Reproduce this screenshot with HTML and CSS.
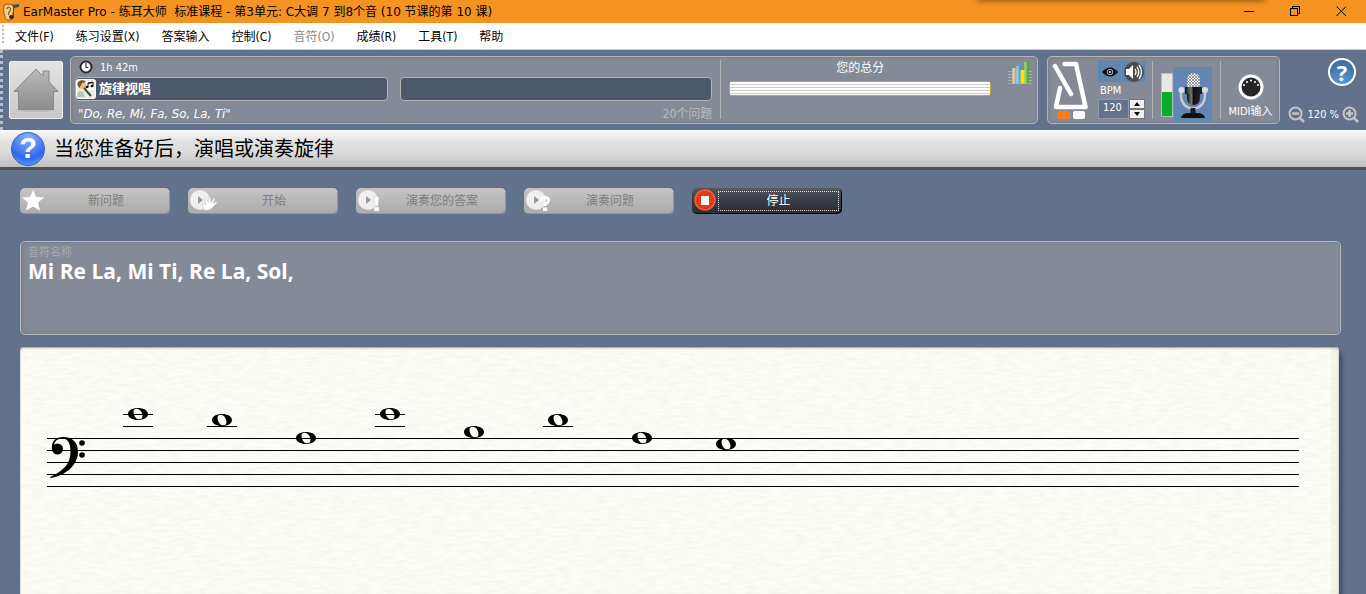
FILE: index.html
```html
<!DOCTYPE html>
<html lang="zh-CN">

<head>
  <meta charset="UTF-8">
  <meta name="viewport" content="width=device-width, initial-scale=1.0">
  <title>EarMaster Pro</title>
  <link rel="stylesheet" href="styles.css">
</head>

<body>
  <header class="titlebar">
    <svg class="app-icon" width="17" height="18" viewBox="0 0 17 18" aria-hidden="true">
      <path d="M2.500 2C5 .8 8 .8 11 2C12 5 12 8 11 10L10.500 16C7 18 3 17 3 14C1.500 10 1 5 2.500 2Z" fill="#f4cf82" stroke="#8a5516"/>
      <path d="M5 6C6 3 9 4 8.500 7C8 9 6 9 6.500 12" fill="none" stroke="#8a5c20" stroke-width="1.200"/>
      <path d="M10 2L17 1V4L12 5V14H11V4Z" fill="#4f4a48"/>
      <ellipse cx="9.500" cy="14" rx="2.500" ry="2" fill="#3c2410"/>
    </svg>
    <h1>EarMaster Pro - 练耳大师&nbsp; 标准课程 - 第3单元: C大调 7 到8个音 (10 节课的第 10 课)</h1>
    <div class="window-buttons">
      <button type="button" aria-label="最小化"><svg width="11" height="11" viewBox="0 0 11 11" shape-rendering="crispEdges"><path d="M0 5.500H10" stroke="#000"/></svg></button>
      <button type="button" aria-label="还原"><svg width="11" height="11" viewBox="0 0 11 11" shape-rendering="crispEdges"><path d="M.5 2.500H7.500V9.500H.5ZM2.500 2V.5H9.500V7.500H8" fill="none" stroke="#000"/></svg></button>
      <button type="button" aria-label="关闭"><svg width="11" height="11" viewBox="0 0 11 11"><path d="M.5 .5L10 10M10 .5L.5 10" stroke="#000"/></svg></button>
    </div>
    <div class="top-shadow"></div>
  </header>

  <nav class="menubar">
    <button type="button">文件(F)</button>
    <button type="button">练习设置(X)</button>
    <button type="button">答案输入</button>
    <button type="button">控制(C)</button>
    <button type="button" disabled>音符(O)</button>
    <button type="button">成绩(R)</button>
    <button type="button">工具(T)</button>
    <button type="button">帮助</button>
  </nav>

  <div class="toolbar">
    <button type="button" class="home" aria-label="主页">
      <svg width="46" height="46" viewBox="0 0 46 46">
        <defs>
          <linearGradient id="house" x1="0" y1="0" x2="0" y2="1"><stop offset="0" stop-color="#b9b9b9"/><stop offset="1" stop-color="#8d8d8d"/></linearGradient>
        </defs>
        <ellipse cx="23" cy="43" rx="21" ry="2" fill="#bdbdbd"/>
        <path d="M1 24.500L23 2L30 9V4H36V15L45 24.500H40.500V42.500H5.500V24.500Z" fill="url(#house)" stroke="#888" stroke-linejoin="round"/>
      </svg>
    </button>

    <section class="panel lesson">
      <div class="progress">
        <div class="time">
          <svg width="14" height="14" viewBox="0 0 14 14" aria-hidden="true"><circle cx="7" cy="7" r="5.500" fill="#fff" stroke="#2b2b2b" stroke-width="2"/><path d="M7 3V7.500H9.500" fill="none" stroke="#333" stroke-width="1.200"/></svg>
          <span>1h 42m</span>
        </div>
        <div class="fields">
          <div class="field">
            <svg width="20" height="20" viewBox="0 0 20 20" aria-hidden="true">
              <rect x=".5" y=".5" width="19" height="19" rx="2" fill="#efede6" stroke="#fff"/>
              <path d="M9 2H18V11H9Z" fill="#fff"/>
              <circle cx="6" cy="6" r="4" fill="#efbd76"/>
              <path d="M1.500 6C1 1 8 0 10 3L6 4L3.500 9Z" fill="#77572c"/>
              <path d="M1 18C1 12 4 11 7 13L9 18Z" fill="#b9c6bd"/>
              <path d="M8 9L15 17" stroke="#4a4a44" stroke-width="2"/>
              <path d="M12 8V4L17 3V7M12 4.500L17 3.500" fill="none" stroke="#111"/>
              <ellipse cx="11" cy="8" rx="1.500" ry="1.200"/><ellipse cx="16" cy="7" rx="1.500" ry="1.200"/>
            </svg>
            <strong>旋律视唱</strong>
          </div>
          <div class="field"></div>
        </div>
        <div class="lesson-info">
          <em>"Do, Re, Mi, Fa, So, La, Ti"</em>
          <span class="count">20个问题</span>
        </div>
      </div>
      <div class="score">
        <span>您的总分</span>
        <div class="score-bar"></div>
      </div>
      <svg class="chart" width="24" height="24" viewBox="0 0 24 24" aria-hidden="true">
        <defs>
          <linearGradient id="tan"><stop stop-color="#f2dfc4"/><stop offset="1" stop-color="#b99768"/></linearGradient>
          <linearGradient id="sky"><stop stop-color="#aee0ff"/><stop offset="1" stop-color="#169bf5"/></linearGradient>
          <linearGradient id="leaf"><stop stop-color="#a7ec73"/><stop offset="1" stop-color="#35a524"/></linearGradient>
        </defs>
        <path d="M0 10.500H24M0 13.500H24M0 16.500H24M0 19.500H24M0 22.500H24" stroke="#aaa"/>
        <path d="M4.500 7H8.500V22.500H4.500Z" fill="url(#tan)"/><path d="M8.500 5H12.500V22.500H8.500Z" fill="url(#sky)"/>
        <path d="M12.500 9H16.500V22.500H12.500Z" fill="#ffe20a"/><path d="M16.500 1H20.500V22.500H16.500Z" fill="url(#leaf)"/>
      </svg>
    </section>

    <section class="panel devices">
      <div class="metronome">
        <svg width="36" height="49" viewBox="0 0 36 49" aria-hidden="true">
          <path d="M12.500 3H24L33.500 46H4L8 27M3 5L19 33" fill="none" stroke="#fff" stroke-width="4.500" stroke-linecap="round" stroke-linejoin="round"/>
        </svg>
        <div class="beats"><i></i><i></i></div>
      </div>
      <div class="tempo">
        <div class="toggles">
          <button type="button" aria-label="显示节拍器">
            <svg width="16" height="12" viewBox="0 0 16 12"><path d="M0 6Q8-3 16 6Q8 15 0 6Z" fill="#111"/><circle cx="8" cy="6" r="3" fill="#ddd"/><circle cx="8" cy="6" r="2.300" fill="#111"/><circle cx="8" cy="6" r="1" fill="#fff"/></svg>
          </button>
          <button type="button" aria-label="节拍器声音">
            <svg width="20" height="20" viewBox="0 0 20 20"><circle cx="10" cy="10" r="10" fill="#4c4c4c"/><path d="M2 7H5L9 3V17L5 13H2Z" fill="#fff"/><path d="M11 7Q13 10 11 13M13 5Q16.500 10 13 15M15 3Q20 10 15 17" fill="none" stroke="#fff" stroke-width="1.300"/></svg>
          </button>
        </div>
        <label for="bpm">BPM</label>
        <div class="spinner">
          <input id="bpm" type="text" value="120">
          <div class="steps">
            <button type="button" aria-label="加快"><svg width="6" height="4" viewBox="0 0 6 4"><path d="M0 4L3 0L6 4Z"/></svg></button>
            <button type="button" aria-label="减慢"><svg width="6" height="4" viewBox="0 0 6 4"><path d="M0 0H6L3 4Z"/></svg></button>
          </div>
        </div>
      </div>
      <div class="mic">
        <div class="level"><i></i></div>
        <button type="button" aria-label="麦克风">
          <svg width="36" height="52" viewBox="0 0 36 52">
            <defs>
              <pattern id="mesh" width="3" height="3" patternUnits="userSpaceOnUse"><rect width="3" height="3" fill="#eee"/><path d="M0 0L3 3M3 0L0 3" stroke="#777" stroke-width=".7"/></pattern>
              <linearGradient id="body"><stop stop-color="#0a0a0a"/><stop offset=".35" stop-color="#777"/><stop offset=".5" stop-color="#111"/><stop offset="1" stop-color="#222"/></linearGradient>
            </defs>
            <path d="M6 22V27C6 45 30 45 30 27V22" fill="none" stroke="#c9cbd1" stroke-width="2.500"/>
            <path d="M18 40V48" stroke="#1b1b1b" stroke-width="5"/>
            <path d="M6 50Q7 45 14 45H22Q29 45 30 50Z" fill="#111"/>
            <path d="M12 20H25V29Q25 37 18.500 37Q12 37 12 29Z" fill="url(#body)"/>
            <path d="M12 19V12Q12 5 18.500 5Q25 5 25 12V19Z" fill="url(#mesh)"/>
            <path d="M10 19H27V26H10Z" fill="url(#body)"/>
            <circle cx="6.500" cy="22" r="3" fill="#ddd"/><circle cx="30" cy="22" r="3" fill="#ddd"/>
          </svg>
        </button>
      </div>
      <div class="midi">
        <svg width="26" height="26" viewBox="0 0 26 26" aria-hidden="true"><circle cx="13" cy="13" r="11" fill="#252525" stroke="#fff" stroke-width="3"/><g fill="#fff"><circle cx="6" cy="11" r="1"/><circle cx="9" cy="8" r="1"/><circle cx="13" cy="6.500" r="1"/><circle cx="17" cy="8" r="1"/><circle cx="20" cy="11" r="1"/></g></svg>
        <span>MIDI输入</span>
      </div>
    </section>

    <div class="view-tools">
      <button type="button" class="help" aria-label="帮助">?</button>
      <div class="zoom">
        <button type="button" aria-label="缩小"><svg width="17" height="18" viewBox="0 0 17 18"><circle cx="7.500" cy="7.500" r="6" fill="none" stroke="#c4c4c4" stroke-width="2"/><path d="M4 7.500H11M12 12L16 16" stroke="#c4c4c4" stroke-width="2.500"/></svg></button>
        <span>120 %</span>
        <button type="button" aria-label="放大"><svg width="17" height="18" viewBox="0 0 17 18"><circle cx="7.500" cy="7.500" r="6" fill="none" stroke="#c4c4c4" stroke-width="2"/><path d="M4 7.500H11M7.500 4V11M12 12L16 16" stroke="#c4c4c4" stroke-width="2.500"/></svg></button>
      </div>
    </div>
  </div>

  <div class="prompt">
    <span class="prompt-icon">?</span>
    <h2>当您准备好后，演唱或演奏旋律</h2>
  </div>

  <main>
    <div class="actions">
      <button type="button" disabled>
        <svg width="28" height="24" viewBox="0 0 28 24"><path d="M11 1L14 8L22 8.500L16 13.500L18 21.500L11 17.500L4 21.500L6 13.500L0 8.500L8 8Z" fill="#fff"/></svg>
        <span>新问题</span>
      </button>
      <button type="button" disabled>
        <svg width="28" height="24" viewBox="0 0 28 24"><circle cx="10" cy="11" r="10" fill="#efefef"/><path d="M8 7V15L13 11Z" fill="#999"/><path d="M14 21L12.500 15L14 14L16 16L14.500 9L16 9L18.500 13.500L19 8L20.500 8L21 13.500L24 9L25 10L23 14.500L26.500 12.500L27 14L23 18Q20 22 14 21Z" fill="#fff" stroke="#c4c4c4" stroke-width=".6"/></svg>
        <span>开始</span>
      </button>
      <button type="button" disabled>
        <svg width="28" height="24" viewBox="0 0 28 24"><circle cx="10" cy="11" r="10" fill="#efefef"/><path d="M8 7V15L13 11Z" fill="#999"/><path d="M16 8H21L20 17H17ZM16 18H21V22H16Z" fill="#fff" stroke="#ccc" stroke-width=".5"/></svg>
        <span>演奏您的答案</span>
      </button>
      <button type="button" disabled>
        <svg width="28" height="24" viewBox="0 0 28 24"><circle cx="10" cy="11" r="10" fill="#efefef"/><path d="M8 7V15L13 11Z" fill="#999"/><path d="M15 12Q15 8.500 19 8.500Q23 8.500 22.500 12Q22 14 19 15V17" fill="none" stroke="#fff" stroke-width="3"/><path d="M17 18.500H21V22H17Z" fill="#fff"/></svg>
        <span>演奏问题</span>
      </button>
      <button type="button" class="stop">
        <svg width="24" height="24" viewBox="0 0 24 24"><circle cx="11" cy="11" r="10" fill="#e03a1a" stroke="#f0603c" stroke-width="1.500"/><path d="M7 7H15V16H7Z" fill="#f5f5f5"/></svg>
        <span>停止</span>
      </button>
    </div>

    <section class="note-names">
      <h3>音符名称</h3>
      <p>Mi Re La, Mi Ti, Re La, Sol,</p>
    </section>

    <section class="paper">
      <svg class="grain" width="100%" height="100%" aria-hidden="true">
        <filter id="grain"><feTurbulence type="fractalNoise" baseFrequency=".08 .35" numOctaves="2"/><feColorMatrix values="0 0 0 0 .5  0 0 0 0 .5  0 0 0 0 .46  .25 0 0 0 -.09"/></filter>
        <rect width="100%" height="100%" filter="url(#grain)"/>
      </svg>
      <svg class="staff" width="100%" height="110" role="img" aria-label="旋律乐谱">
        <defs>
          <path id="whole" d="M-10 0C-10-3.800-5.500-6 0-6S10-3.800 10 0S5.500 6 0 6S-10 3.800-10 0ZM-4.500-2C-4.500 1.500 -2 5.300 1.200 5.300C3.700 5.300 4.500 4 4.500 2C4.500-1.500 2-5.300-1.200-5.300C-3.700-5.300-4.500-4-4.500-2Z" fill-rule="evenodd"/>
        </defs>
        <!-- staff lines -->
        <g stroke="#000" shape-rendering="crispEdges">
          <line x1="0" x2="100%" y1="38.500" y2="38.500"/>
          <line x1="0" x2="100%" y1="50.500" y2="50.500"/>
          <line x1="0" x2="100%" y1="62.500" y2="62.500"/>
          <line x1="0" x2="100%" y1="74.500" y2="74.500"/>
          <line x1="0" x2="100%" y1="86.500" y2="86.500"/>
          <path d="M76 14.500H106M76 26.500H106M160 26.500H190M328 14.500H358M328 26.500H358M496 26.500H526"/>
        </g>
        <!-- bass clef -->
        <path d="M5 50C4 42 8 37 16 37C26 37 31 43 31 52C31 65 18 76 3.500 78L3 77C17 71 23.500 63 23.500 52C23.500 43 21 38.500 15 38.500C10 38.500 6.500 42 7 47Z"/>
        <circle cx="10.500" cy="49" r="5.500"/>
        <circle cx="35" cy="43" r="2.800"/><circle cx="35" cy="55" r="2.800"/>
        <!-- melody -->
        <use href="#whole" x="91" y="14"/>
        <use href="#whole" x="175" y="20"/>
        <use href="#whole" x="259" y="38"/>
        <use href="#whole" x="343" y="14"/>
        <use href="#whole" x="427" y="32"/>
        <use href="#whole" x="511" y="20"/>
        <use href="#whole" x="595" y="38"/>
        <use href="#whole" x="679" y="44"/>
      </svg>
    </section>
  </main>
</body>

</html>
```
FILE: styles.css
```css
:root {
  --slate: #63728c;
  --panel: #858b96;
  --line: #b5b5b5;
  --field: #4d576a;
  --active: #6286b0;
}

*,*::before,*::after { box-sizing: border-box; }

body {
  margin: 0;
  height: 100vh;
  display: flex;
  flex-direction: column;
  overflow: hidden;
  background: var(--slate);
  font-family: "Noto Sans", "Noto Sans CJK SC", sans-serif;
  font-size: 12px;
  line-height: 16px;
}

h1, h2, h3, p { margin: 0; font-weight: 400; }
svg { display: block; flex: none; }
button, input { font: inherit; }
button {
  display: flex;
  align-items: center;
  justify-content: center;
  padding: 0;
  border: 0;
  background: none;
  color: inherit;
}

/* title bar */
.titlebar {
  position: relative;
  flex: none;
  height: 23px;
  display: flex;
  align-items: center;
  padding: 0 2px;
  background: #f59322;
}

.titlebar h1 {
  flex: 1;
  margin-left: 4px;
  font: 12px/16px "DejaVu Sans", "Noto Sans CJK SC", sans-serif;
}

.window-buttons { display: flex; }
.window-buttons button { width: 46px; height: 20px; }

.top-shadow {
  position: absolute;
  top: -4px;
  right: 101px;
  width: 288px;
  height: 4px;
  box-shadow: 0 0 6px #5c3500;
}

/* menu */
.menubar {
  flex: none;
  height: 27px;
  display: flex;
  gap: 22px;
  padding: 2px 0 0 2px;
  background: #fff;
  border-bottom: 1px solid #ccc;
  font-family: "DejaVu Sans Condensed", "Noto Sans CJK SC", sans-serif;
}

.menubar::before {
  content: "";
  width: 2px;
  height: 18px;
  margin-right: -11px;
  background: repeating-linear-gradient(#bbb 0 2px, #fff 2px 4px);
}

.menubar button:disabled { color: #888; }

/* toolbar */
.toolbar {
  flex: none;
  height: 80px;
  display: flex;
  padding: 6px 7px 6px 6px;
  border-left: 3px dotted #b7bfcc;
  color: #fff;
  font-family: "DejaVu Sans Condensed", "Noto Sans CJK SC", sans-serif;
  font-size: 11px;
}

.home {
  width: 54px;
  height: 58px;
  margin: 5px 7px 0 0;
  border: 1px solid #eee;
  border-radius: 2px;
  background: linear-gradient(#e3e3e3, #c8c8c8);
}

.panel {
  display: flex;
  border: 1px solid var(--line);
  border-radius: 5px;
  background: var(--panel);
  box-shadow: inset 0 0 4px #747a86;
}

.lesson { flex: 1; padding: 3px 5px 4px 4px; }

.progress {
  flex: 638;
  display: flex;
  flex-direction: column;
  padding-right: 8px;
  border-right: 1px solid var(--line);
}

.time { display: flex; gap: 7px; padding: 0 0 1px 4px; }
.fields { display: flex; gap: 12px; }

.field {
  flex: 1;
  height: 24px;
  display: flex;
  align-items: center;
  gap: 3px;
  border: 1px solid var(--line);
  border-radius: 4px;
  background: var(--field);
}

.field strong { font-size: 13px; }

.lesson-info {
  display: flex;
  justify-content: space-between;
  padding: 5px 0 0 3px;
}

.lesson-info em { font-size: 13px; }
.count { color: #bbb; font-size: 12px; }

.score {
  flex: 262;
  display: flex;
  flex-direction: column;
  align-items: center;
  gap: 5px;
  padding: 0 8px;
  font-size: 12px;
}

.score-bar {
  width: 100%;
  height: 15px;
  border: 1px solid #bda83b;
  border-radius: 2px;
  background: repeating-linear-gradient(#fff 0 2px, #ccc 2px 3px);
}

.chart { margin: 1px 0 0 9px; }

.devices { margin-left: 9px; padding: 4px 5px 4px 4px; width: 233px; }
.metronome { width: 36px; }
.beats { display: flex; gap: 3px; padding: 1px 0 0 6px; }
.beats i { width: 12px; height: 8px; border-radius: 2px; background: #fff; }
.beats i:first-child { background: #ff7b20; }

.tempo { width: 49px; margin-left: 10px; }
.toggles { display: flex; gap: 1px; }
.toggles button { width: 23px; height: 21px; border: 1px solid #5489bd; background: var(--active); }
.tempo label { display: block; padding: 1px 0 0 2px; }
.spinner { display: flex; }

.spinner input {
  width: 31px;
  height: 20px;
  padding: 0 0 3px 4px;
  border: 1px solid #8e99aa;
  background: var(--slate);
  color: #fff;
}

.steps button {
  width: 16px;
  height: 10px;
  border: 1px solid #777;
  background: #f0f0f0;
}

.mic {
  display: flex;
  gap: 1px;
  margin-left: 5px;
  padding: 0 8px;
  border-left: 1px solid var(--line);
}

.level {
  width: 12px;
  height: 44px;
  margin-top: 12px;
  display: flex;
  align-items: flex-end;
  border: 1px solid #bbb;
  background: #e8e8e8;
}

.level i { width: 100%; height: 58%; background: #08ad27; }
.mic button { width: 38px; height: 54px; margin-top: 6px; border: 1px solid #5489bd; background: var(--active); }

.midi {
  flex: 1;
  display: flex;
  flex-direction: column;
  align-items: center;
  gap: 4px;
  padding: 13px 0 0 6px;
  border-left: 1px solid var(--line);
  white-space: nowrap;
}

.view-tools {
  width: 72px;
  margin-left: 7px;
  display: flex;
  flex-direction: column;
  align-items: flex-end;
  justify-content: space-between;
}

.help {
  width: 28px;
  height: 28px;
  margin: 2px 3px 0 0;
  border: 2px solid #fff;
  border-radius: 50%;
  background: radial-gradient(circle at 50% 100%, #609bd2, #34639d);
  font: bold 22px "Open Sans", sans-serif;
}

.zoom { display: flex; align-items: center; gap: 3px; white-space: nowrap; }

/* prompt */
.prompt {
  flex: none;
  height: 40px;
  display: flex;
  align-items: center;
  gap: 9px;
  padding-left: 11px;
  background: linear-gradient(#fafafa, #e2e2e2 30%, #dcdcdc 60%, #bdbdbd);
  border-bottom: 3px solid #505050;
}

.prompt-icon {
  width: 34px;
  height: 34px;
  border: 1px solid #3c62bb;
  border-radius: 50%;
  background: radial-gradient(circle at 50% 15%, #8eb2ff, #3068ee 65%, #66b5ff);
  color: #fff;
  font: bold 29px/31px "Liberation Sans", sans-serif;
  text-align: center;
}

.prompt h2 { font-size: 20px; line-height: 28px; }

/* exercise */
main {
  flex: 1;
  min-height: 0;
  display: flex;
  flex-direction: column;
  padding: 18px 25px 0 20px;
}

.actions { display: flex; gap: 18px; }

.actions button {
  width: 150px;
  height: 26px;
  padding-left: 2px;
  border-radius: 5px;
  background: linear-gradient(#c5c5c5, #aaa);
  box-shadow: inset -1px -1px #969696;
  color: #7d7d7d;
}

.actions span { flex: 1; padding-right: 8px; text-align: center; }

.actions .stop {
  background: linear-gradient(#555962, #3a3e48 40%, #292c33);
  box-shadow: inset -1px -1px #000;
  color: #fff;
}

.stop span {
  height: 20px;
  margin-right: 3px;
  padding: 0;
  border: 1px dotted #ddd;
  line-height: 18px;
}

.note-names {
  flex: none;
  height: 94px;
  margin-top: 27px;
  padding: 2px 7px;
  border: 1px solid var(--line);
  border-radius: 5px;
  background: var(--panel);
  box-shadow: inset 1px 0 4px #747a86;
}

.note-names h3 { color: #aaa; font-size: 11px; }
.note-names p { color: #fff; font: bold 21px/22px "Open Sans", sans-serif; }

.paper {
  position: relative;
  flex: 1;
  margin: 12px 2px 0 0;
  padding: 53px 40px 0 27px;
  border-radius: 4px 4px 0 0;
  background: #fefef8;
  box-shadow: 3px 5px 5px #3f4a60, inset 0 1px 2px #999, inset -8px 0 #f5f5ec;
}

.grain { position: absolute; inset: 0; }
.staff { position: relative; }
```
